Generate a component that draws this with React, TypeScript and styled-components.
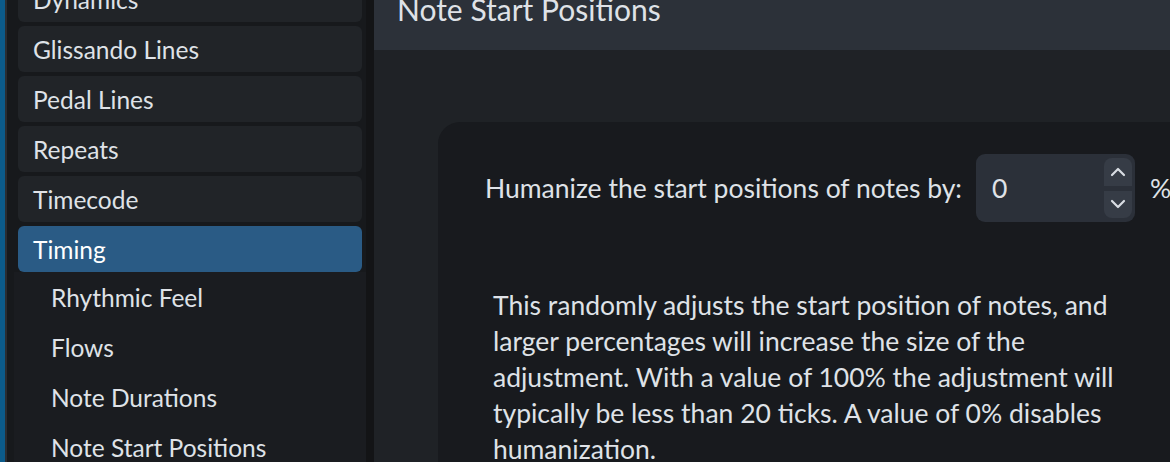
import React from "react";
import styled, { createGlobalStyle } from "styled-components";

const Global = createGlobalStyle`
  html, body { margin: 0; padding: 0; background: #141517; }
  body { font-family: "Lato", "Open Sans", sans-serif; -webkit-font-smoothing: antialiased; }
  * { box-sizing: border-box; }
`;

const Root = styled.div`
  display: flex;
  width: 1170px;
  height: 462px;
  overflow: hidden;
  background: #141517;
  color: #dfe2e7;
`;

const EdgeStrip = styled.div`
  width: 5px;
  flex: none;
  background: #0c5b8a;
  border-right: 2px solid #2a2d32;
  box-sizing: content-box;
`;

const Sidebar = styled.nav`
  width: 359px;
  flex: none;
  background: #17191c;
  padding-left: 7px;
  overflow: hidden;
`;

const SideColumn = styled.div`
  display: flex;
  flex-direction: column;
  margin-top: -24px;
  width: 352px;
`;

const NavItem = styled.div<{ $active?: boolean }>`
  height: 46px;
  margin: 0 4px ${(p) => (p.$active ? "0" : "4px")};
  padding-left: 15px;
  display: flex;
  align-items: center;
  border-radius: 6px;
  background: ${(p) => (p.$active ? "#2a5b85" : "#212428")};
  color: ${(p) => (p.$active ? "#ffffff" : "#dfe2e7")};
  font-size: 24.5px;
  white-space: nowrap;
`;

const SubGroup = styled.div`
  display: flex;
  flex-direction: column;
  background: #1a1c20;
`;

const SubItem = styled.div`
  height: 50px;
  display: flex;
  align-items: center;
  padding-left: 37px;
  font-size: 24.5px;
  color: #dfe2e7;
  white-space: nowrap;
`;

const Divider = styled.div`
  width: 8px;
  flex: none;
  background: #131416;
`;

const Main = styled.main`
  flex: 1;
  display: flex;
  flex-direction: column;
  background: #1f2226;
  overflow: hidden;
`;

const Header = styled.header`
  height: 50px;
  flex: none;
  background: #2c3139;
  padding-left: 23px;
  overflow: hidden;
`;

const Title = styled.h1`
  margin: -6px 0 0;
  font-size: 30px;
  line-height: 30px;
  font-weight: 400;
  color: #dfe2e7;
  white-space: nowrap;
`;

const Body = styled.div`
  flex: 1;
  padding: 72px 0 0 64px;
  display: flex;
`;

const Card = styled.section`
  flex: 1;
  background: #181a1e;
  border-top-left-radius: 22px;
  padding: 32px 0 0 47px;
`;

const FieldRow = styled.div`
  display: flex;
  align-items: center;
  white-space: nowrap;
  font-size: 26.5px;
`;

const Label = styled.span`
  margin-right: 14px;
`;

const SpinBox = styled.div`
  width: 159px;
  height: 68px;
  flex: none;
  display: flex;
  align-items: stretch;
  background: #2b3039;
  border-radius: 9px;
  padding: 4px 3px 4px 16px;
`;

const SpinValue = styled.span`
  flex: 1;
  display: flex;
  align-items: center;
  font-size: 26.5px;
  color: #dfe2e7;
`;

const SpinButtons = styled.div`
  width: 28px;
  display: flex;
  flex-direction: column;
  gap: 5px;
`;

const SpinButton = styled.div<{ $dir: "up" | "down" }>`
  flex: 1;
  display: flex;
  align-items: center;
  justify-content: center;
  background: #363c46;
  border-radius: ${(p) => (p.$dir === "up" ? "8px 8px 0 0" : "0 0 8px 8px")};
`;

const Unit = styled.span`
  margin-left: 15px;
`;

const Description = styled.p`
  margin: 65px 0 0 8px;
  font-size: 26.5px;
  line-height: 36px;
  white-space: nowrap;
  color: #dfe2e7;
`;

const Chevron = ({ up }: { up?: boolean }) => (
  <svg width="16" height="10" viewBox="0 0 16 10" fill="none">
    <path
      d={up ? "M2 8 L8 2 L14 8" : "M2 2 L8 8 L14 2"}
      stroke="#d9dde3"
      strokeWidth="2.2"
      strokeLinecap="round"
      strokeLinejoin="round"
    />
  </svg>
);

const mainItems = ["Dynamics", "Glissando Lines", "Pedal Lines", "Repeats", "Timecode"];
const subItems = ["Rhythmic Feel", "Flows", "Note Durations", "Note Start Positions"];

export default function App() {
  return (
    <>
      <Global />
      <Root>
        <EdgeStrip />
        <Sidebar>
          <SideColumn>
            {mainItems.map((m) => (
              <NavItem key={m}>{m}</NavItem>
            ))}
            <NavItem $active>Timing</NavItem>
            <SubGroup>
              {subItems.map((s) => (
                <SubItem key={s}>{s}</SubItem>
              ))}
            </SubGroup>
          </SideColumn>
        </Sidebar>
        <Divider />
        <Main>
          <Header>
            <Title>Note Start Positions</Title>
          </Header>
          <Body>
            <Card>
              <FieldRow>
                <Label>Humanize the start positions of notes by:</Label>
                <SpinBox>
                  <SpinValue>0</SpinValue>
                  <SpinButtons>
                    <SpinButton $dir="up">
                      <Chevron up />
                    </SpinButton>
                    <SpinButton $dir="down">
                      <Chevron />
                    </SpinButton>
                  </SpinButtons>
                </SpinBox>
                <Unit>%</Unit>
              </FieldRow>
              <Description>
                This randomly adjusts the start position of notes, and
                <br />
                larger percentages will increase the size of the
                <br />
                adjustment. With a value of 100% the adjustment will
                <br />
                typically be less than 20 ticks. A value of 0% disables
                <br />
                humanization.
              </Description>
            </Card>
          </Body>
        </Main>
      </Root>
    </>
  );
}
